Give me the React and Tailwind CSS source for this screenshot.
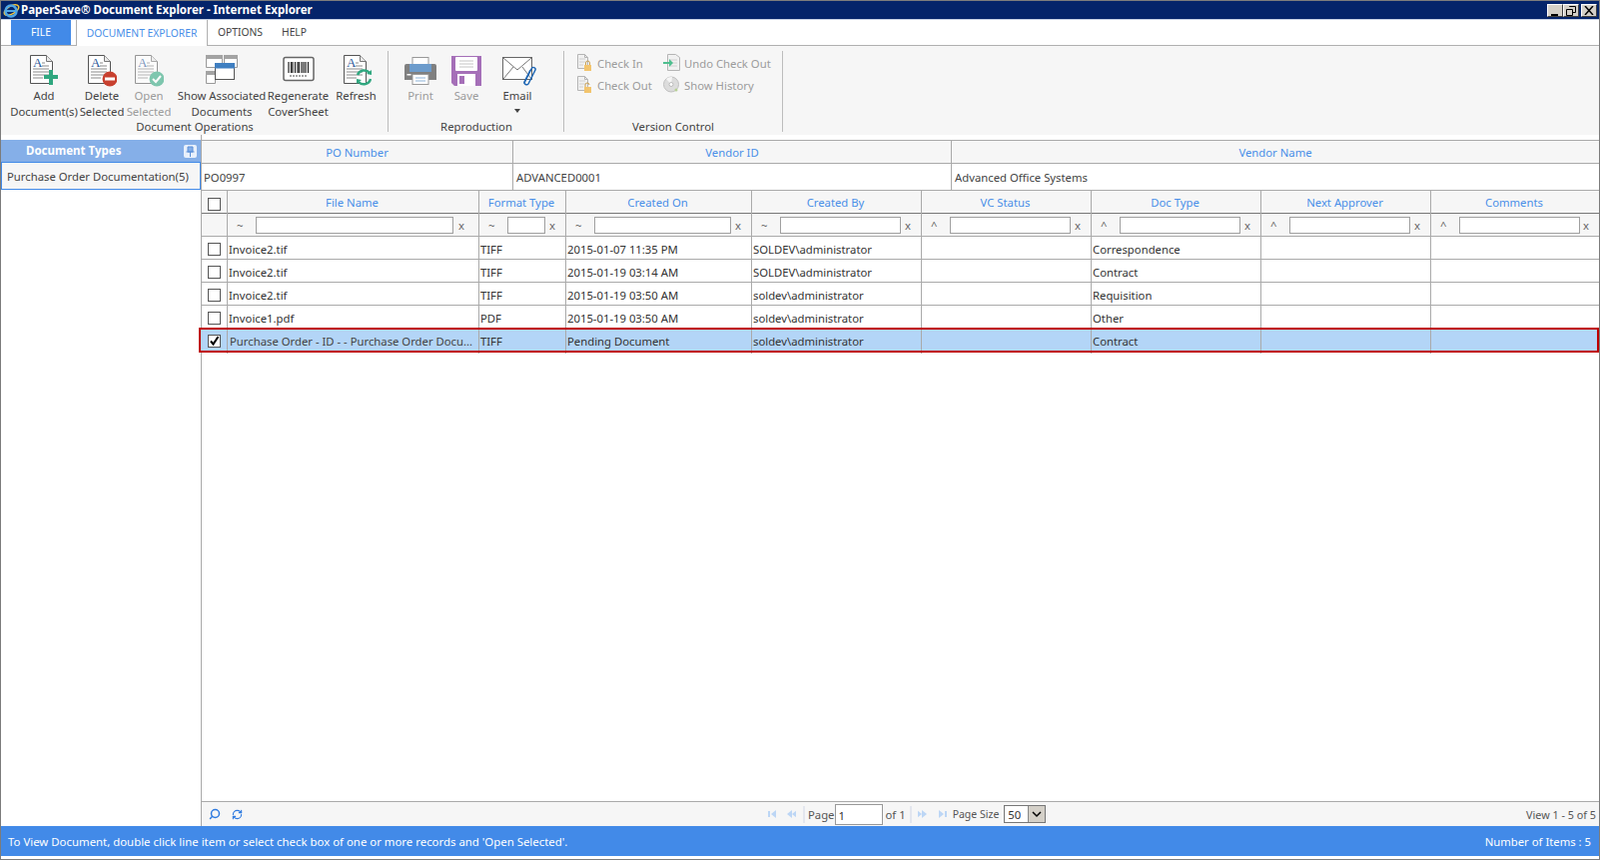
import React from "react";
import { Search, RefreshCw } from "lucide-react";

const A = ({ x = 3, y = 12 }) => (
  <text x={x} y={y} fontFamily="Liberation Serif, serif" fontSize="13" fill="#2b5797">A</text>
);

const DocBody = ({ dx = 1 }) => (
  <g transform={`translate(${dx} 0)`}>
    <path d="M.5.5h16l6 6v22H.5z" fill="#fff" stroke="#555" />
    <path d="M16.5.5v6h6" fill="#e8e8e8" stroke="#777" />
    <A />
    <path d="M12 8h3M12 11h7M3 14h16M3 17h16M3 20h16M3 23h10" stroke="#8a8a8a" />
  </g>
);

const AddIcon = () => (
  <svg width="30" height="31" viewBox="0 0 30 31">
    <DocBody />
    <path d="M15 20h5v-5h4v5h5v4h-5v6h-4v-6h-5z" fill="#2fa77f" />
  </svg>
);
const DeleteIcon = () => (
  <svg width="30" height="32" viewBox="0 0 30 32">
    <DocBody />
    <circle cx="23" cy="24" r="7.5" fill="#c8402f" />
    <rect x="18" y="22.5" width="10" height="3" fill="#fff" />
  </svg>
);
const OpenIcon = () => (
  <svg width="30" height="32" viewBox="0 0 30 32" opacity=".6">
    <DocBody />
    <circle cx="23" cy="24" r="7.5" fill="#2fa77f" />
    <path d="M19 24l3 3 5-6" fill="none" stroke="#fff" strokeWidth="2" />
  </svg>
);
const ShowIcon = () => (
  <svg width="32" height="31" viewBox="0 0 32 31">
    <path d="M.5.5h16v12H.5zM18.5.5h13v12h-13zM.5 16.5h9v12h-9z" fill="#fff" stroke="#999" />
    <path d="M0 0h17v4H0zM18 0h14v4H18zM0 16h10v4H0z" fill="#a3a3a3" />
    <rect x="9.5" y="8.5" width="19" height="16" fill="#fff" stroke="#555" />
    <rect x="9" y="8" width="20" height="5.500" fill="#3f7fc1" />
  </svg>
);
const BarcodeIcon = () => (
  <svg width="32" height="31" viewBox="0 0 32 31">
    <rect x="1" y="2.500" width="30" height="23" rx="2" fill="#fff" stroke="#666" strokeWidth="1.500" />
    <path d="M6 7v11M8.500 7v11M10 7v11M12.500 7v11M15 7v11M16.500 7v11M19 7v11M21 7v11M23 7v11M25.500 7v11" stroke="#222" strokeWidth="1.200" />
    <path d="M7 21h18" stroke="#888" strokeWidth="1.500" strokeDasharray="2 1" />
  </svg>
);
const RefreshIcon = () => (
  <svg width="30" height="31" viewBox="0 0 30 31">
    <DocBody dx={2} />
    <path d="M16 20a7 7 0 0 1 12-2M29 24a7 7 0 0 1-12 3" fill="none" stroke="#2fa77f" strokeWidth="2.500" />
    <path d="M25 19l5 1v-5zM20 25l-5-1v5z" fill="#2fa77f" />
  </svg>
);
const PrintIcon = () => (
  <svg width="32" height="32" viewBox="0 0 32 32">
    <rect x="8" y="2.500" width="16" height="10" fill="#fff" stroke="#999" />
    <path d="M2 9h28a2 2 0 0 1 2 2v14H0V11a2 2 0 0 1 2-2z" fill="#808080" />
    <rect x="5" y="9" width="22" height="8" fill="#6d9ccc" />
    <rect x="2.500" y="19" width="4" height="1.500" fill="#fff" />
    <rect x="8" y="19.500" width="16" height="10" fill="#fff" stroke="#999" />
    <path d="M11 23h10M11 26h10" stroke="#8db3d9" />
  </svg>
);
const SaveIcon = () => (
  <svg width="30" height="32" viewBox="0 0 30 32">
    <path d="M0 1h30v30H3l-3-3z" fill="#a56fb8" />
    <rect x="4" y="2" width="22" height="14" rx="1" fill="#fff" />
    <path d="M8 6h14M8 9h14M8 12h14" stroke="#c4c4c4" />
    <rect x="6" y="19" width="18" height="12" fill="#fff" />
    <rect x="8" y="21" width="5" height="8" fill="#a56fb8" />
  </svg>
);
const EmailIcon = () => (
  <svg width="34" height="32" viewBox="0 0 34 32">
    <rect x=".5" y="2.500" width="29" height="22" fill="#fff" stroke="#666" />
    <path d="M1 3l14 12L29 3M1 24l10-12M29 24L20 12" fill="none" stroke="#777" />
    <path d="M22 28l7-14c1-3 5-1 4 1l-7 14c-1 2-5 0-4-2l6-12" fill="none" stroke="#1f67b5" strokeWidth="1.500" />
  </svg>
);
const LockDoc = ({ open }) => (
  <svg width="14" height="18" viewBox="0 0 14 18" className="shrink-0">
    <path d="M.5.5h7l3 3v11H.5z" fill="#f1f1f1" stroke="#b5b5b5" />
    <path d="M7.500.5v3h3" fill="none" stroke="#b5b5b5" />
    <path d="M2 5h6M2 8h6M2 11h4" stroke="#d0d0d0" />
    <rect x="7" y="11" width="7" height="6" fill="#f2c46d" />
    <path d={open ? "M8 11V9a2 2 0 0 1 4 0" : "M8.500 11V9a2 2 0 0 1 4 0v2"} fill="none" stroke="#c9a050" />
  </svg>
);
const UndoIcon = () => (
  <svg width="17" height="18" viewBox="0 0 17 18" className="shrink-0">
    <path d="M4.500.5h8l4 3v13h-12z" fill="#f1f1f1" stroke="#b5b5b5" />
    <path d="M7 6h7M7 9h7M7 12h7" stroke="#d0d0d0" />
    <path d="M0 8h6V5l4 4-4 4v-3H0z" fill="#4fbf8f" />
  </svg>
);
const CdIcon = () => (
  <svg width="17" height="18" viewBox="0 0 17 18" className="shrink-0">
    <circle cx="8" cy="8.500" r="7.500" fill="#dcdcdc" stroke="#c0c0c0" />
    <path d="M8 8.500L3 3a7.500 7.500 0 0 1 6-2z" fill="#f5f5f5" />
    <circle cx="8" cy="8.500" r="2" fill="#fff" stroke="#bbb" />
    <circle cx="13" cy="14" r="1.500" fill="#b6cf93" />
  </svg>
);

const RibbonBtn = ({ w, label, second, icon, disabled, ml, caret, iconClass = "" }) => (
  <div className={`flex flex-col items-center ${w} ${ml} ${disabled ? "text-[#9c9c9c]" : "text-[#444]"}`}>
    <div className={`h-[37px] shrink-0 pt-[4px] ${iconClass}`}>{icon}</div>
    <div className="whitespace-nowrap leading-[16px] shrink-0">{label}</div>
    {second && <div className="whitespace-nowrap leading-[16px] shrink-0">{second}</div>}
    {caret && <div className="mt-[5px] shrink-0 w-0 h-0 border-x-[3px] border-x-transparent border-t-[4px] border-t-[#444]"></div>}
  </div>
);

const VcItem = ({ icon, label, gap }) => (
  <div className={`flex items-center h-[22px] text-[#9c9c9c] ${gap}`}>
    {icon}
    <span className="whitespace-nowrap pt-[2px]">{label}</span>
  </div>
);

const Divider = () => <div className="w-px h-[81px] bg-[#bdbdbd] shrink-0"></div>;

const cols = "grid grid-cols-[26px_252px_87px_186px_170px_170px_170px_170px_168px]";
const cell = "border-r border-[#aaaaaa] last:border-r-0 min-w-0";

const Check = ({ checked }) => (
  <div className="w-[13px] h-[13px] border border-[#555] bg-white flex items-center justify-center">
    {checked && (
      <svg width="11" height="11" viewBox="0 0 11 11">
        <path d="M2 5.500l2.500 3L9.500 1" fill="none" stroke="#000" strokeWidth="2" />
      </svg>
    )}
  </div>
);

const headers = ["File Name", "Format Type", "Created On", "Created By", "VC Status", "Doc Type", "Next Approver", "Comments"];
const filters = [
  { s: "~", r: "pr-[25px]", xr: "right-[14px]" },
  { s: "~", r: "pr-[20px]" },
  { s: "~", r: "pr-[20px]" },
  { s: "~", r: "pr-[20px]" },
  { s: "^", r: "pr-[20px]" },
  { s: "^", r: "pr-[20px]" },
  { s: "^", r: "pr-[20px]" },
  { s: "^", r: "pr-[19px]" },
];

const rows = [
  ["Invoice2.tif", "TIFF", "2015-01-07 11:35 PM", "SOLDEV\\administrator", "", "Correspondence"],
  ["Invoice2.tif", "TIFF", "2015-01-19 03:14 AM", "SOLDEV\\administrator", "", "Contract"],
  ["Invoice2.tif", "TIFF", "2015-01-19 03:50 AM", "soldev\\administrator", "", "Requisition"],
  ["Invoice1.pdf", "PDF", "2015-01-19 03:50 AM", "soldev\\administrator", "", "Other"],
];
const selectedRow = ["Purchase Order - ID - - Purchase Order Docu...", "TIFF", "Pending Document", "soldev\\administrator", "", "Contract"];

const DataRow = ({ data, selected }) => (
  <div className={`${cols} h-[23px] items-stretch ${selected ? "bg-[#b3d5f7] outline-2 -outline-offset-1 outline-[#bf0000] relative -ml-[2px] pl-[2px] mr-px" : "border-b border-[#aaaaaa]"}`}>
    <div className={`${cell} flex items-center justify-center`}>
      <Check checked={selected} />
    </div>
    {[...data, "", ""].map((t, i) => (
      <div key={i} className={`${cell} leading-[25px] whitespace-nowrap ${selected && i === 0 ? "pl-[2px] text-[#444]" : "pl-px text-[#333]"}`}>{t}</div>
    ))}
  </div>
);

const TriL = ({ bar }) => (
  <svg width="12" height="8" viewBox="0 0 12 8">
    {bar && <rect x="0" y="1" width="2" height="6" fill="#bcd6f5" />}
    <path d="M8 0v8L3 4z" fill="#bcd6f5" />
    {!bar && <path d="M13 0v8L8 4z" fill="#bcd6f5" />}
  </svg>
);

export default function App() {
  return (
    <div className="h-[861px] w-[1602px] flex flex-col border border-[#7c7c7c] bg-white text-[11.3px] text-[#444] font-['Open_Sans','Noto_Sans',sans-serif] overflow-hidden">
      {/* Title bar */}
      <div className="h-[18px] bg-[#04246a] flex items-center shrink-0 pl-[2px] pr-[2px] border-b-0">
        <svg width="17" height="17" viewBox="0 0 17 17" className="shrink-0">
          <ellipse cx="8.500" cy="8" rx="8" ry="4" fill="none" stroke="#f5c53c" strokeWidth="1.500" transform="rotate(-30 8.500 8)" />
          <circle cx="8" cy="9" r="5.500" fill="none" stroke="#4fa6e6" strokeWidth="2.500" />
          <path d="M3 9h10" stroke="#4fa6e6" strokeWidth="2" />
        </svg>
        <div className="ml-[1px] text-white font-bold text-[11.5px] font-['Noto_Sans',sans-serif] whitespace-nowrap leading-[18px]">PaperSave® Document Explorer - Internet Explorer</div>
        <div className="ml-auto flex items-center">
          {[
            <path key="m" d="M3 10h7v2H3z" fill="#000" />,
            <path key="r" d="M2.500 5.500h6v6h-6zM5.500 3V2.500h6v6H9" fill="none" stroke="#000" />,
          ].map((p, i) => (
            <div key={i} className="w-[16px] h-[13px] bg-[#d4d0c8] border-t border-l border-t-white border-l-white border-r border-b border-r-[#404040] border-b-[#404040] flex items-center justify-center">
              <svg width="14" height="13" viewBox="0 0 14 13">{p}</svg>
            </div>
          ))}
          <div className="ml-[2px] w-[16px] h-[13px] bg-[#d4d0c8] border-t border-l border-t-white border-l-white border-r border-b border-r-[#404040] border-b-[#404040] flex items-center justify-center">
            <svg width="10" height="9" viewBox="0 0 10 9"><path d="M1 0l8 9M9 0L1 9" stroke="#000" strokeWidth="1.500" /></svg>
          </div>
        </div>
      </div>
      {/* Menu */}
      <div className="h-[27px] shrink-0 flex border-t border-t-[#c9d3e6] border-b border-b-[#b0b0b0] pl-[10px] text-[10.3px]">
        <div className="w-[60px] h-[25px] pt-px bg-[#428ae8] text-white flex items-center justify-center">FILE</div>
        <div className="ml-[5px] w-[132px] h-[26px] pt-px -mb-px relative bg-white border-x border-[#b0b0b0] text-[#4a8fe8] flex items-center justify-center whitespace-nowrap">DOCUMENT EXPLORER</div>
        <div className="ml-[10px] h-[25px] pt-px flex items-center text-[#444]">OPTIONS</div>
        <div className="ml-[19px] h-[25px] pt-px flex items-center text-[#444]">HELP</div>
      </div>
      {/* Ribbon */}
      <div className="h-[89px] shrink-0 bg-[#f6f6f6] flex pt-[5px] pl-[10px]">
        <div className="w-[377px] shrink-0 flex flex-col">
          <div className="flex h-[68px]">
            <RibbonBtn w="w-[66px]" label="Add" second="Document(s)" icon={<AddIcon />} />
            <RibbonBtn w="w-[44px]" ml="ml-[3px]" label="Delete" second="Selected" icon={<DeleteIcon />} />
            <RibbonBtn w="w-[44px]" ml="ml-[3px]" label="Open" second="Selected" icon={<OpenIcon />} disabled />
            <RibbonBtn w="w-[90px]" ml="ml-[6px]" label="Show Associated" second="Documents" icon={<ShowIcon />} />
            <RibbonBtn w="w-[61px]" ml="ml-[1px]" label="Regenerate" second="CoverSheet" icon={<BarcodeIcon />} />
            <RibbonBtn w="w-[39px]" ml="ml-[8px]" label="Refresh" icon={<RefreshIcon />} />
          </div>
          <div className="leading-[16px] w-[368px] text-center">Document Operations</div>
        </div>
        <Divider />
        <div className="w-[175px] shrink-0 flex flex-col">
          <div className="flex h-[68px] pl-[8px]">
            <RibbonBtn w="w-[48px]" label="Print" icon={<PrintIcon />} disabled />
            <RibbonBtn w="w-[44px]" label="Save" icon={<SaveIcon />} disabled />
            <RibbonBtn w="w-[58px]" label="Email" icon={<EmailIcon />} caret iconClass="ml-[3px]" />
          </div>
          <div className="leading-[16px] pl-[8px] w-[168px] text-center">Reproduction</div>
        </div>
        <Divider />
        <div className="w-[218px] shrink-0 flex flex-col">
          <div className="h-[68px] pl-[13px] pt-[1px] flex">
            <div className="w-[86px] flex flex-col">
              <VcItem icon={<LockDoc />} label="Check In" gap="gap-[6px]" />
              <VcItem icon={<LockDoc open />} label="Check Out" gap="gap-[6px]" />
            </div>
            <div className="flex flex-col">
              <VcItem icon={<UndoIcon />} label="Undo Check Out" gap="gap-[4px]" />
              <VcItem icon={<CdIcon />} label="Show History" gap="gap-[4px]" />
            </div>
          </div>
          <div className="leading-[16px] text-center">Version Control</div>
        </div>
        <Divider />
      </div>
      {/* Main */}
      <div className="flex-1 flex min-h-0">
        <div className="w-[201px] shrink-0 border-r border-[#aaaaaa] pt-[5px] flex flex-col">
          <div className="h-[22px] bg-[#85afe8] flex items-center text-white font-bold text-[11.5px] pl-[25px] relative">
            Document Types
            <div className="ml-auto mr-[4px] w-[13px] h-[13px] rounded-[2px] bg-[#e8f0fb] flex items-center justify-center">
              <svg width="9" height="11" viewBox="0 0 9 11"><path d="M2 1h5v5H2zM0.500 6h8M4.500 6v5" fill="#85afe8" stroke="#5a8fd8" /></svg>
            </div>
          </div>
          <div className="h-[28px] pt-[2px] bg-[#f6f6f6] border border-[#428ae8] flex items-center pl-[5px] whitespace-nowrap text-[#444]">Purchase Order Documentation(5)</div>
        </div>
        <div className="flex-1 min-w-0 flex flex-col pt-[5px]">
          {/* top info table */}
          <div className="grid grid-cols-[312px_439px_648px] h-[24px] border-t border-b border-[#aaaaaa] bg-[#f6f6f6] text-[#4a8fe8] text-center leading-[24px]">
            <div className={cell}>PO Number</div>
            <div className={cell}>Vendor ID</div>
            <div className={cell}>Vendor Name</div>
          </div>
          <div className="grid grid-cols-[312px_439px_648px] h-[27px] border-b border-[#aaaaaa] leading-[28px] text-[#444]">
            <div className={`${cell} pl-[2px]`}>PO0997</div>
            <div className={`${cell} pl-[3px]`}>ADVANCED0001</div>
            <div className={`${cell} pl-[3px]`}>Advanced Office Systems</div>
          </div>
          {/* grid header */}
          <div className={`${cols} h-[23px] border-b border-[#777] bg-[#f6f6f6] text-[#4a8fe8] text-center leading-[24px]`}>
            <div className={`${cell} flex items-center justify-center pt-[2px]`}><Check /></div>
            {headers.map((h) => (
              <div key={h} className={`${cell} whitespace-nowrap pr-[2px]`}>{h}</div>
            ))}
          </div>
          {/* filters */}
          <div className={`${cols} h-[23px] border-b border-[#aaaaaa] bg-[#f6f6f6]`}>
            <div className={cell}></div>
            {filters.map((f, i) => (
              <div key={i} className={`${cell} flex items-center pl-[9px] ${f.r} relative`}>
                <span className="w-[19px] shrink-0 text-[#666] leading-none pt-[2px]">{f.s}</span>
                <div className="flex-1 min-w-0 h-[17px] bg-white border border-[#a0a0a0]"></div>
                <span className={`absolute ${f.xr || "right-[10px]"} text-[#666] leading-none pt-[2px]`}>x</span>
              </div>
            ))}
          </div>
          {rows.map((r, i) => (
            <DataRow key={i} data={r} />
          ))}
          <DataRow data={selectedRow} selected />
        </div>
      </div>
      {/* Pager, spans grid only */}
      <div className="h-[25px] shrink-0 flex">
        <div className="w-[201px] shrink-0 border-r border-[#aaaaaa]"></div>
        <div className="flex-1 min-w-0 bg-[#f6f6f6] border-t border-[#aaaaaa] flex items-center text-[#555]">
          <Search size={12} strokeWidth={3} className="text-[#2f7be0] ml-[7px] -scale-x-100" />
          <RefreshCw size={11} strokeWidth={2.500} className="text-[#2f7be0] ml-[11px]" />
          <div className="ml-[526px]"><TriL bar /></div>
          <div className="ml-[4px]"><TriL /></div>
          <div className="ml-[7px] w-[2px] h-[17px] bg-[#e3e6ee]"></div>
          <span className="ml-[3px] pt-[2px]">Page</span>
          <div className="w-[48px] h-[21px] bg-white border border-[#999] pl-[3px] leading-[21px] text-[#333]">1</div>
          <span className="ml-[3px] pt-[2px]">of 1</span>
          <div className="ml-[4px] w-[2px] h-[17px] bg-[#e3e6ee]"></div>
          <div className="ml-[6px] -scale-x-100"><TriL /></div>
          <div className="ml-[5px] -scale-x-100"><TriL bar /></div>
          <span className="ml-[6px] whitespace-nowrap text-[10.5px] pt-[2px]">Page Size</span>
          <div className="ml-[5px] w-[42px] h-[18px] bg-white border border-[#777] flex text-[#333]">
            <span className="flex-1 pl-[3px] leading-[17px]">50</span>
            <div className="w-[17px] bg-[#d4d0c8] border-l border-[#888] flex items-center justify-center">
              <svg width="10" height="7" viewBox="0 0 10 7"><path d="M1 1l4 4 4-4" fill="none" stroke="#000" strokeWidth="1.500" /></svg>
            </div>
          </div>
          <span className="ml-auto mr-[3px] whitespace-nowrap text-[10.8px] pt-[2px]">View 1 - 5 of 5</span>
        </div>
      </div>
      {/* Status */}
      <div className="h-[30px] shrink-0 bg-[#428ae8] text-white flex items-center justify-between pl-[7px] pr-[8px] pt-[2px]">
        <span className="whitespace-nowrap text-[11.4px]">To View Document, double click line item or select check box of one or more records and 'Open Selected'.</span>
        <span className="whitespace-nowrap">Number of Items : 5</span>
      </div>
      <div className="h-[3px] shrink-0 bg-white"></div>
    </div>
  );
}
